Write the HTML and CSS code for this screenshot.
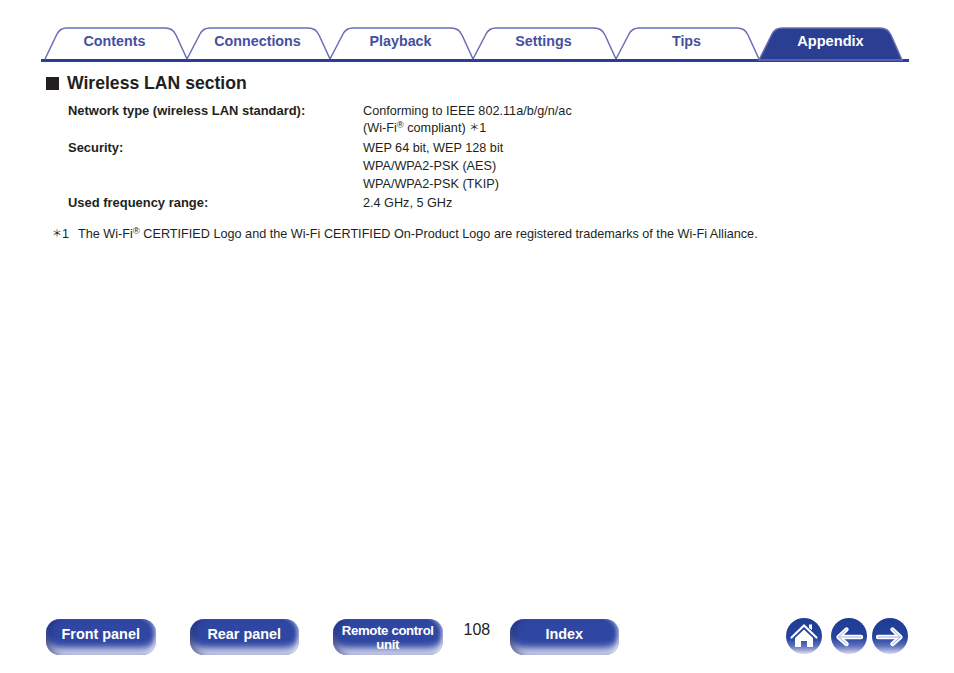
FILE: index.html
```html
<!DOCTYPE html>
<html lang="en">
<head>
<meta charset="utf-8">
<title>Wireless LAN section</title>
<link rel="stylesheet" href="styles.css">
</head>
<body>
<nav class="tabs">
  <a class="tab"><svg class="tab-shape" viewBox="0 0 143 33"><path d="M1 32 L13 7 Q16 1 23 1 L121 1 Q129 1 132 8 L143 32"/></svg><span class="tab-label">Contents</span></a>
  <a class="tab"><svg class="tab-shape" viewBox="0 0 143 33"><path d="M0 32 L13 7 Q16 1 23 1 L121 1 Q129 1 132 8 L143 32"/></svg><span class="tab-label">Connections</span></a>
  <a class="tab"><svg class="tab-shape" viewBox="0 0 143 33"><path d="M0 32 L13 7 Q16 1 23 1 L121 1 Q129 1 132 8 L143 32"/></svg><span class="tab-label">Playback</span></a>
  <a class="tab"><svg class="tab-shape" viewBox="0 0 143 33"><path d="M0 32 L13 7 Q16 1 23 1 L121 1 Q129 1 132 8 L143 32"/></svg><span class="tab-label">Settings</span></a>
  <a class="tab"><svg class="tab-shape" viewBox="0 0 143 33"><path d="M0 32 L13 7 Q16 1 23 1 L121 1 Q129 1 132 8 L143 32"/></svg><span class="tab-label">Tips</span></a>
  <a class="tab tab-active"><svg class="tab-shape" viewBox="0 0 143 33"><path d="M0 33 L13 7 Q16 1 23 1 L121 1 Q129 1 132 8 L143 33 Z"/></svg><span class="tab-label">Appendix</span></a>
</nav>

<main class="content">
  <h2 class="section-title"><span class="section-mark"></span>Wireless LAN section</h2>
  <dl class="specs">
    <dt class="spec-name">Network type (wireless LAN standard):</dt>
    <dd class="spec-value">
      <div class="line-a">Conforming to IEEE 802.11a/b/g/n/ac</div>
      <div class="line-b">(Wi-Fi<sup class="reg">®</sup> compliant) <span class="ast">＊</span>1</div>
    </dd>
    <dt class="spec-name">Security:</dt>
    <dd class="spec-value spec-group">
      <div class="line-c">WEP 64 bit, WEP 128 bit</div>
      <div class="line-c">WPA/WPA2-PSK (AES)</div>
      <div class="line-c">WPA/WPA2-PSK (TKIP)</div>
    </dd>
    <dt class="spec-name">Used frequency range:</dt>
    <dd class="spec-value"><div class="line-c">2.4 GHz, 5 GHz</div></dd>
  </dl>
  <p class="footnote"><span class="note-mark"><span class="ast">＊</span>1</span><span class="note-text">The Wi-Fi<sup class="reg">®</sup> CERTIFIED Logo and the Wi-Fi CERTIFIED On-Product Logo are registered trademarks of the Wi-Fi Alliance.</span></p>
</main>

<footer class="footer">
  <a class="pill">Front panel</a>
  <a class="pill">Rear panel</a>
  <a class="pill pill-small">Remote control unit</a>
  <span class="page-num">108</span>
  <a class="pill">Index</a>
  <div class="round-icons">
    <a class="round"><svg viewBox="0 0 36 36" class="round-svg">
      <path class="ico-fill" d="M23 6.5 L26 6.5 L26 12 L23 10 Z"/>
      <path class="ico-roof" d="M5.5 19.5 L18 7.5 L30.5 19.5"/>
      <path class="ico-fill" d="M9 20 L18 11.5 L27 20 L27 29 L21 29 L21 23 L15 23 L15 29 L9 29 Z"/>
    </svg></a>
    <a class="round"><svg viewBox="0 0 36 36" class="round-svg">
      <path class="ico-line" d="M15.5 11.5 L7.5 19 L15.5 26 M8 19 L30 19"/>
      <path class="ico-inner" d="M15.5 11.5 L7.5 19 L15.5 26 M8 19 L30 19"/>
    </svg></a>
    <a class="round"><svg viewBox="0 0 36 36" class="round-svg">
      <path class="ico-line" d="M20.5 11.5 L28.5 19 L20.5 26 M28 19 L6 19"/>
      <path class="ico-inner" d="M20.5 11.5 L28.5 19 L20.5 26 M28 19 L6 19"/>
    </svg></a>
  </div>
</footer>
</body>
</html>
```
FILE: styles.css
```css
* { box-sizing: border-box; }
html, body { height: 100%; }
body {
  margin: 0;
  height: 673px;
  display: flex;
  flex-direction: column;
  background: #fff;
  color: #231f20;
  font-family: "Liberation Sans", Arial, sans-serif;
  overflow: hidden;
}
.tabs {
  display: flex;
  margin: 27px 45px 0 41px;
  padding-left: 3px;
  height: 35px;
  border-bottom: 3px solid #2b3f92;
}
.tab {
  position: relative;
  width: 143px;
  height: 33px;
  flex: none;
  display: flex;
  justify-content: center;
  color: #45509f;
  font-size: 14.3px;
  font-weight: 700;
}
.tab-shape {
  position: absolute;
  left: 0;
  top: 0;
  width: 143px;
  height: 33px;
  overflow: visible;
}
.tab-shape path {
  fill: none;
  stroke: #6a6db5;
  stroke-width: 1.5;
}
.tab-label { position: relative; padding: 6px 2px 0 0; line-height: 17px; }
.tab-active { color: #fff; font-size: 14.6px; }
.tab-active .tab-label { padding-right: 0; }
.tab-active .tab-shape path { fill: #2b3f92; }
.content { flex: 1; padding: 10px 0 0 46px; }
.section-title {
  margin: 0;
  display: flex;
  align-items: center;
  font-size: 17.6px;
  line-height: 22px;
  font-weight: 700;
  color: #231f20;
}
.section-mark {
  width: 13px;
  height: 13px;
  margin-right: 8px;
  background: #231f20;
}
.specs {
  margin: 8px 0 0 22px;
  display: grid;
  grid-template-columns: 295px 1fr;
  font-size: 12.67px;
}
.spec-name { font-weight: 700; line-height: 18px; font-size: 12.95px; }
.spec-value { margin: 0; }
.spec-group { padding-bottom: 1px; }
.line-a { line-height: 18px; }
.line-b { line-height: 17px; padding-bottom: 2px; }
.line-c { line-height: 18px; }
.reg { font-size: 9.5px; line-height: 0; vertical-align: 4px; }
.ast {
  font-family: "Noto Sans CJK JP", sans-serif;
  font-size: 10px;
  line-height: 0;
  vertical-align: 1px;
}
.footnote {
  margin: 13px 0 0 6px;
  display: flex;
  font-size: 12.67px;
  line-height: 18px;
}
.note-mark { width: 26px; flex: none; }
.footer {
  display: flex;
  align-items: flex-start;
  height: 54px;
  padding-left: 46px;
}
.pill {
  width: 109.5px;
  height: 36px;
  margin-right: 34px;
  flex: none;
  display: flex;
  align-items: center;
  justify-content: center;
  text-align: center;
  padding-bottom: 6px;
  color: #fff;
  font-size: 14.4px;
  font-weight: 700;
  border-radius: 14px;
  background: #2f47a2;
  box-shadow:
    inset 6px 0 6px -2px rgba(26, 40, 110, .6),
    inset 0 -10px 7px -3px rgba(238, 238, 250, .85),
    inset -4px 0 4px -2px rgba(220, 220, 245, .6);
}
.pill-small {
  font-size: 13.2px;
  line-height: 14px;
  letter-spacing: -.35px;
  padding: 1px 0 0;
  margin-right: 21px;
}
.page-num {
  width: 46px;
  flex: none;
  font-size: 16px;
  line-height: 20px;
  margin-top: 1px;
}
.round-icons {
  display: flex;
  gap: 5px;
  margin-left: 133px;
  margin-top: -1px;
}
.round-icons .round:first-child { margin-right: 4px; }
.round {
  width: 36px;
  height: 36px;
  border-radius: 50%;
  background: linear-gradient(#1f3c94 0, #24439c 55%, #5f72bc 78%, #dcdcf0 100%);
}
.round-svg { display: block; width: 36px; height: 36px; }
.ico-fill { fill: #fff; }
.ico-roof {
  fill: none;
  stroke: #fff;
  stroke-width: 2.2;
  stroke-linecap: round;
}
.ico-line {
  fill: none;
  stroke: #fff;
  stroke-width: 4.4;
  stroke-linecap: round;
  stroke-linejoin: round;
}
.ico-inner {
  fill: none;
  stroke: #9fb0e0;
  stroke-width: 1;
  stroke-linecap: round;
  stroke-linejoin: round;
}
```
